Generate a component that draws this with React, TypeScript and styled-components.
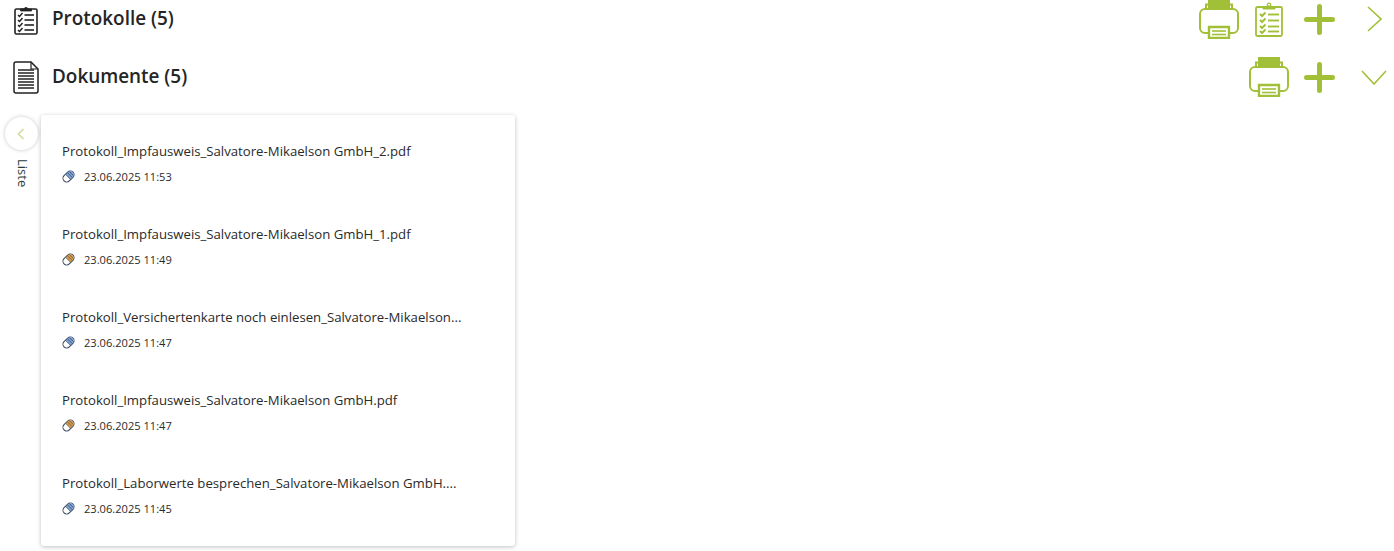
import React from 'react';
import styled, { createGlobalStyle } from 'styled-components';

const GlobalStyle = createGlobalStyle`
	html, body {
		margin: 0;
		padding: 0;
		background: #fff;
		overflow: hidden;
	}
	body {
		font-family: 'Open Sans', 'Noto Sans', 'Liberation Sans', sans-serif;
		color: #252525;
	}
`;

const Page = styled.div`
	width: 1394px;
	height: 551px;
	overflow: hidden;
`;

const SectionList = styled.div`
	margin-top: -10px;
	display: flex;
	flex-direction: column;
`;

const SectionRow = styled.div`
	height: 58px;
	display: flex;
	align-items: center;
	padding-left: 12px;
`;

const SectionIcon = styled.span`
	width: 28px;
	height: 36px;
	margin-right: 12px;
	display: flex;
	align-items: center;
	justify-content: center;
`;

const SectionTitle = styled.h2`
	margin: 0 0 2px;
	font-size: 18.9px;
	font-weight: 600;
	line-height: 24px;
	flex: 1;
`;

const Actions = styled.div`
	display: flex;
	align-items: center;
`;

const ActionSlot = styled.span`
	width: 50px;
	height: 44px;
	box-sizing: border-box;
	display: flex;
	align-items: center;
	justify-content: center;
`;

const ChevronSlot = styled(ActionSlot)`
	padding-left: 10px;
`;

const Content = styled.div`
	display: flex;
	align-items: flex-start;
	padding-left: 3px;
	margin-top: 9px;
`;

const SideRail = styled.div`
	width: 36px;
	margin-right: 2px;
	display: flex;
	flex-direction: column;
	align-items: center;
	padding-top: 2px;
`;

const CollapseButton = styled.button`
	width: 33px;
	height: 33px;
	padding: 0;
	border: none;
	border-radius: 50%;
	background: #fff;
	box-shadow: 0 0 4px rgba(0, 0, 0, 0.22);
	display: flex;
	align-items: center;
	justify-content: center;
`;

const RailLabel = styled.span`
	margin: 9px 0 0 3px;
	writing-mode: vertical-rl;
	font-size: 13px;
	line-height: 16px;
	color: #2b3a3a;
`;

const Card = styled.div`
	width: 474px;
	height: 431px;
	box-sizing: border-box;
	padding: 20px 20px 0 21px;
	background: #fff;
	border-radius: 3px;
	box-shadow: 0 1px 4px rgba(0, 0, 0, 0.25);
`;

const FileItem = styled.div`
	height: 83px;
	box-sizing: border-box;
	padding-top: 6px;
`;

const FileName = styled.div`
	font-size: 13.2px;
	line-height: 20px;
	color: #2a2a2a;
	white-space: nowrap;
	overflow: hidden;
`;

const FileMeta = styled.div`
	margin-top: 5px;
	display: flex;
	align-items: center;
	height: 20px;
	font-size: 11.1px;
	color: #2a2a2a;
`;

const MetaIcon = styled.span`
	width: 13px;
	height: 13px;
	margin-right: 9px;
	display: flex;
`;

const GREEN = '#a2c037';

const ProtocolIcon = () => (
	<svg width="24" height="31" viewBox="0 0 24 31" fill="none" stroke="#222">
		<rect x="1" y="5" width="22" height="25" rx="1.5" strokeWidth="1.6" />
		<path d="M6.5 7V5h3.4a2.2 2.2 0 0 1 4.2 0h3.4v2z" fill="#222" strokeWidth="0.8" />
		{[11, 16, 21, 26].map(y => (
			<g key={y}>
				<path d={`M4 ${y}l1.5 1.5L8.5 ${y - 2}`} strokeWidth="1.5" />
				<path d={`M10.5 ${y}h9.5`} strokeWidth="1.6" />
			</g>
		))}
	</svg>
);

const GreenClipboardIcon = () => (
	<svg width="28" height="35" viewBox="0 0 28 35" fill="none" stroke={GREEN}>
		<rect x="1" y="5" width="26" height="29" rx="1.5" strokeWidth="1.8" />
		<path d="M8 7V5h4a2.3 2.3 0 0 1 4 0h4v2z" fill={GREEN} strokeWidth="1" />
		<circle cx="14" cy="3" r="1.8" strokeWidth="1.2" />
		{[12, 18, 24, 29].map(y => (
			<g key={y}>
				<path d={`M5 ${y}l2 2 3.5-3.5`} strokeWidth="2" />
				<path d={`M13 ${y + 0.5}h11`} strokeWidth="1.9" />
			</g>
		))}
	</svg>
);

const DocumentIcon = () => (
	<svg width="26" height="33" viewBox="0 0 26 33" fill="none" stroke="#222">
		<path d="M3 1h15l7 7v22a2 2 0 0 1-2 2H3a2 2 0 0 1-2-2V3a2 2 0 0 1 2-2z" strokeWidth="1.5" />
		<path d="M18 1v7h7" strokeWidth="1.2" />
		{[9, 12, 15, 18, 21, 24, 27].map(y => (
			<path key={y} d={`M5 ${y}h16`} strokeWidth="1.5" />
		))}
	</svg>
);

const PrinterIcon = () => (
	<svg width="40" height="40" viewBox="0 0 40 40" fill="none" stroke={GREEN} strokeWidth="2">
		<path d="M9 0h22v10H9z" fill={GREEN} stroke="none" />
		<path d="M7 10V5.5h3M33 10V5.5h-3" />
		<rect x="1" y="10" width="38" height="24" rx="5" />
		<path d="M10 28h20v11H10z" fill="#fff" strokeWidth="2.4" />
		<path d="M13 32h14" strokeWidth="1.6" />
		<path d="M13 35.5h14" strokeWidth="1.6" />
	</svg>
);

const PlusIcon = () => (
	<svg width="31" height="31" viewBox="0 0 31 31" fill="none" stroke={GREEN} strokeWidth="5" strokeLinecap="round">
		<path d="M15.5 2.5v26M2.5 15.5h26" />
	</svg>
);

const ChevronRight = () => (
	<svg width="15" height="26" viewBox="0 0 15 26" fill="none" stroke={GREEN} strokeWidth="1.6">
		<path d="M1 1l13 12L1 25" />
	</svg>
);

const ChevronDown = () => (
	<svg width="26" height="15" viewBox="0 0 26 15" fill="none" stroke={GREEN} strokeWidth="1.6">
		<path d="M1 1l12 13L25 1" />
	</svg>
);

const PillIcon = ({ tone }: { tone: 'blue' | 'mixed' }) => (
	<svg width="13" height="13" viewBox="0 0 13 13" fill="none">
		<g transform="rotate(-45 6.5 6.5)">
			<rect x="0.2" y="2.8" width="12.6" height="7.4" rx="3.7" fill="#fff" stroke="#33415a" strokeWidth="1" />
			<path d="M6 3.2h3.2a3.3 3.3 0 0 1 0 6.6H6z" fill={tone === 'blue' ? '#7fa8dc' : '#d9964e'} />
			<path d="M6 3v7M8.4 3v7M10.6 3.4v6" stroke={tone === 'blue' ? '#33415a' : '#5f6a3c'} strokeWidth="0.8" />
		</g>
	</svg>
);

const files: { name: string; date: string; tone: 'blue' | 'mixed' }[] = [
	{ name: 'Protokoll_Impfausweis_Salvatore-Mikaelson GmbH_2.pdf', date: '23.06.2025 11:53', tone: 'blue' },
	{ name: 'Protokoll_Impfausweis_Salvatore-Mikaelson GmbH_1.pdf', date: '23.06.2025 11:49', tone: 'mixed' },
	{ name: 'Protokoll_Versichertenkarte noch einlesen_Salvatore-Mikaelson...', date: '23.06.2025 11:47', tone: 'blue' },
	{ name: 'Protokoll_Impfausweis_Salvatore-Mikaelson GmbH.pdf', date: '23.06.2025 11:47', tone: 'mixed' },
	{ name: 'Protokoll_Laborwerte besprechen_Salvatore-Mikaelson GmbH....', date: '23.06.2025 11:45', tone: 'blue' },
];

const App: React.FC = () => (
	<Page>
		<GlobalStyle />
		<SectionList>
			<SectionRow>
				<SectionIcon><ProtocolIcon /></SectionIcon>
				<SectionTitle>Protokolle (5)</SectionTitle>
				<Actions>
					<ActionSlot><PrinterIcon /></ActionSlot>
					<ActionSlot><GreenClipboardIcon /></ActionSlot>
					<ActionSlot><PlusIcon /></ActionSlot>
					<ChevronSlot><ChevronRight /></ChevronSlot>
				</Actions>
			</SectionRow>
			<SectionRow>
				<SectionIcon><DocumentIcon /></SectionIcon>
				<SectionTitle>Dokumente (5)</SectionTitle>
				<Actions>
					<ActionSlot><PrinterIcon /></ActionSlot>
					<ActionSlot><PlusIcon /></ActionSlot>
					<ChevronSlot><ChevronDown /></ChevronSlot>
				</Actions>
			</SectionRow>
		</SectionList>
		<Content>
			<SideRail>
				<CollapseButton aria-label="Liste einklappen">
					<svg width="8" height="12" viewBox="0 0 8 12" fill="none" stroke="#cfdc9c" strokeWidth="1.6">
						<path d="M6.5 1L1.5 6l5 5" />
					</svg>
				</CollapseButton>
				<RailLabel>Liste</RailLabel>
			</SideRail>
			<Card>
				{files.map((file, index) => (
					<FileItem key={index}>
						<FileName>{file.name}</FileName>
						<FileMeta>
							<MetaIcon><PillIcon tone={file.tone} /></MetaIcon>
							{file.date}
						</FileMeta>
					</FileItem>
				))}
			</Card>
		</Content>
	</Page>
);

export default App;
